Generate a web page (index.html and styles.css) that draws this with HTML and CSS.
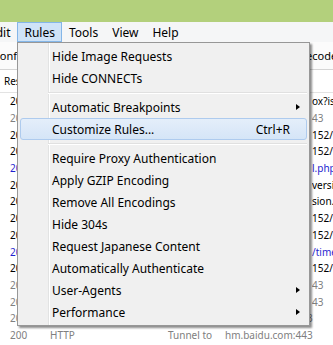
FILE: index.html
```html
<!DOCTYPE html>
<html lang="en">
<head>
    <meta charset="UTF-8">
    <meta name="viewport" content="width=device-width, initial-scale=1.0">
    <title>Rules Menu</title>
    <link rel="stylesheet" href="styles.css">
</head>
<body>
    <div class="titlebar"></div>

    <div class="menubar">
        <span class="menubar-item edit">Edit</span>
        <span class="menubar-item active">Rules</span>
        <span class="menubar-item">Tools</span>
        <span class="menubar-item">View</span>
        <span class="menubar-item">Help</span>
    </div>

    <div class="toolbar">
        <span class="tool-btn winconfig">WinConfig</span>
        <span class="tool-btn decode">Decode</span>
    </div>

    <div class="session-list">
        <div class="list-header">
            <span>Result</span>
        </div>
        <div class="row"><span>200</span><span></span><span></span><span></span><span class="tail">ox?isl</span></div>
        <div class="row gray"><span>200</span><span></span><span></span><span></span><span class="tail">43</span></div>
        <div class="row"><span>200</span><span></span><span></span><span></span><span class="tail">152/6</span></div>
        <div class="row"><span>200</span><span></span><span></span><span></span><span class="tail">152/6</span></div>
        <div class="row blue"><span>200</span><span></span><span></span><span></span><span class="tail">l.php</span></div>
        <div class="row"><span>200</span><span></span><span></span><span></span><span class="tail">versi</span></div>
        <div class="row"><span>200</span><span></span><span></span><span></span><span class="tail">sion.</span></div>
        <div class="row"><span>200</span><span></span><span></span><span></span><span class="tail">152/6</span></div>
        <div class="row"><span>200</span><span></span><span></span><span></span><span class="tail">152/6</span></div>
        <div class="row blue"><span>200</span><span></span><span></span><span></span><span class="tail">/time</span></div>
        <div class="row"><span>200</span><span></span><span></span><span></span><span class="tail">152/6</span></div>
        <div class="row gray"><span>200</span><span></span><span></span><span></span><span class="tail">43</span></div>
        <div class="row gray"><span>200</span><span></span><span></span><span></span><span class="tail">43</span></div>
        <div class="row gray"><span>200</span><span>HTTP</span><span>Tunnel to</span><span>hm.baidu.com:443</span><span class="tail"></span></div>
        <div class="row gray"><span>200</span><span>HTTP</span><span>Tunnel to</span><span>hm.baidu.com:443</span><span class="tail"></span></div>
    </div>

    <!-- Rules dropdown, open over the session list -->
    <div class="dropdown">
        <div class="menu-item"><span class="label">Hide Image Requests</span></div>
        <div class="menu-item"><span class="label">Hide CONNECTs</span></div>
        <div class="separator"></div>
        <div class="menu-item"><span class="label">Automatic Breakpoints</span><span class="shortcut"></span><span class="arrow"></span></div>
        <div class="menu-item selected"><span class="label">Customize Rules...</span><span class="shortcut">Ctrl+R</span></div>
        <div class="separator"></div>
        <div class="menu-item"><span class="label">Require Proxy Authentication</span></div>
        <div class="menu-item"><span class="label">Apply GZIP Encoding</span></div>
        <div class="menu-item"><span class="label">Remove All Encodings</span></div>
        <div class="menu-item"><span class="label">Hide 304s</span></div>
        <div class="menu-item"><span class="label">Request Japanese Content</span></div>
        <div class="menu-item"><span class="label">Automatically Authenticate</span></div>
        <div class="menu-item"><span class="label">User-Agents</span><span class="shortcut"></span><span class="arrow"></span></div>
        <div class="menu-item"><span class="label">Performance</span><span class="shortcut"></span><span class="arrow"></span></div>
    </div>
</body>
</html>
```

FILE: styles.css
```css
body {
    margin: 0;
    width: 333px;
    height: 345px;
    overflow: hidden;
    position: relative;
    font-family: "Noto Sans", Arial, sans-serif;
    background-color: #ffffff;
    color: #000;
}
.titlebar {
    height: 22px;
    background-color: #b3d07c;
}
.menubar {
    display: flex;
    height: 20px;
    background-color: #f5f6f7;
    font-size: 12px;
    margin-left: -18px;
}
.menubar-item {
    display: flex;
    align-items: center;
    padding: 0 6px;
    border: 1px solid transparent;
    box-sizing: border-box;
    height: 20px;
}
.menubar-item.active {
    background-color: #cfe3f7;
    border-color: #84b6e8;
}
.toolbar {
    display: flex;
    height: 27px;
    align-items: center;
    font-size: 11px;
    border-bottom: 1px solid #d5d5d5;
    background-color: #fbfbfb;
}
.tool-btn.winconfig {
    margin-left: -27px;
}
.tool-btn.decode {
    margin-left: auto;
    width: 35px;
    flex-shrink: 0;
    white-space: nowrap;
}
.list-header {
    height: 23px;
    font-size: 10px;
    display: flex;
    align-items: flex-end;
    padding: 0 0 4px 4px;
    box-sizing: border-box;
    border-bottom: 1px solid #e3e3e3;
}
.row {
    display: grid;
    grid-template-columns: 40px 118px 57px 87px 1fr;
    padding-left: 10px;
    height: 16.7px;
    align-items: center;
    font-size: 10px;
    white-space: nowrap;
}
.row.gray {
    color: #808080;
}
.row.blue {
    color: #1f1fd0;
}
.tail {
    overflow: hidden;
}
.dropdown {
    position: absolute;
    left: 17px;
    top: 42px;
    width: 291px;
    padding: 2px 0;
    border: 1px solid #979797;
    font-size: 12px;
    background: linear-gradient(to right, #f0f0f0 30px, #e2e3e3 30px, #e2e3e3 31px, #ffffff 31px, #ffffff 32px, #f0f0f0 32px);
    box-shadow: 2px 2px 2px rgba(0, 0, 0, 0.45);
}
.menu-item {
    display: flex;
    align-items: center;
    height: 22px;
    margin: 0 2px;
    padding-left: 31px;
    border: 1px solid transparent;
    border-radius: 3px;
    box-sizing: border-box;
}
.menu-item.selected {
    background: linear-gradient(#e4eefa, #d5e5f7);
    border-color: #aecbee;
}
.label {
    flex: 1;
}
.shortcut {
    margin-right: 16px;
}
.arrow {
    width: 0;
    height: 0;
    border-left: 4px solid #000;
    border-top: 3.5px solid transparent;
    border-bottom: 3.5px solid transparent;
    margin-right: 6px;
    margin-left: -9px;
}
.separator {
    height: 1px;
    margin: 3px 2px 2px 30px;
    background-color: #e0e0e0;
    border-bottom: 1px solid #ffffff;
}
```
